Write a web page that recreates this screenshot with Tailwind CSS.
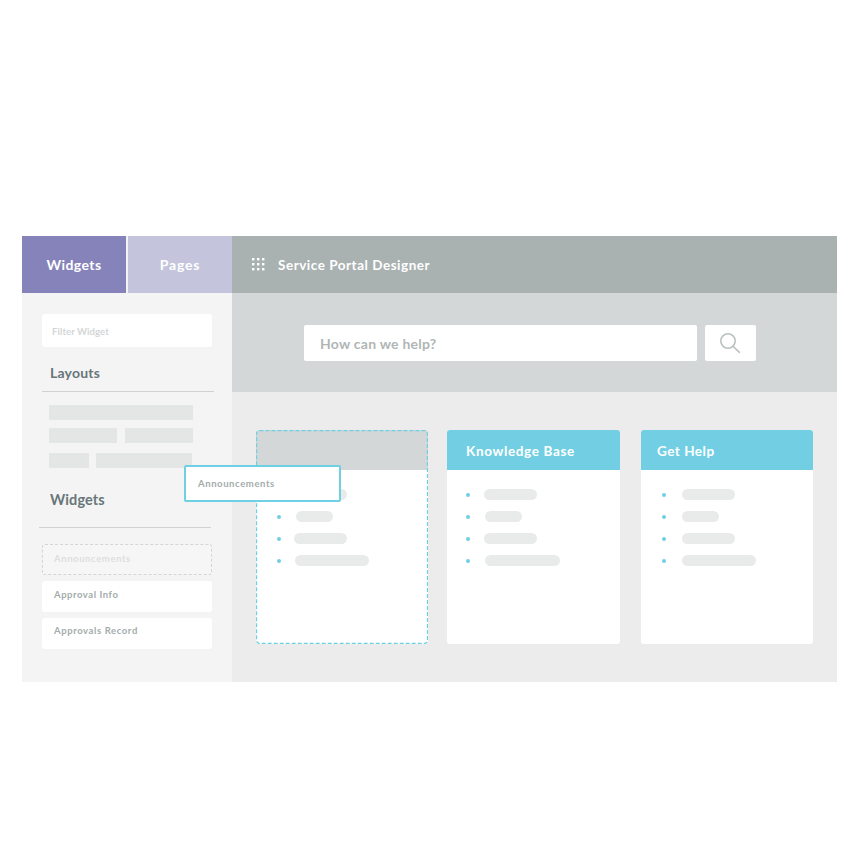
<!doctype html>
<html lang="en">
  <head>
    <meta charset="utf-8" />
    <title>Service Portal Designer</title>
    <script src="https://cdn.jsdelivr.net/npm/@tailwindcss/browser@4"></script>
  </head>
  <body class="bg-white font-['Lato',sans-serif] w-[860px] h-[860px] overflow-hidden">
    <div class="pt-[236px] pl-[22px]">
      <div class="relative flex w-[815px] h-[446px]">
        <!-- left column -->
        <div class="w-[210px] flex flex-col bg-[#f4f4f4]">
          <div class="flex h-[57px] shrink-0">
            <div class="w-[104px] mr-[2px] bg-[#8683ba] text-white text-[14px] font-bold tracking-[0.4px] flex items-center justify-center">Widgets</div>
            <div class="w-[104px] bg-[#c4c4dc] text-white text-[14px] font-bold tracking-[0.8px] flex items-center justify-center">Pages</div>
          </div>
          <div class="pt-[21px] flex flex-col">
            <div class="ml-[20px] w-[170px] h-[33px] pt-[3px] bg-white rounded-[3px] pl-[10px] flex items-center text-[#d3d6d6] text-[9.5px] font-bold tracking-[0.1px]">Filter Widget</div>
            <h2 class="ml-[28px] mt-[17px] h-[20px] leading-[18px] text-[#68767a] text-[14px] font-bold tracking-[0.2px]">Layouts</h2>
            <div class="ml-[20px] mt-[7px] w-[172px] border-t border-[#d0d3d3]"></div>
            <div class="ml-[27px] mt-[13px] flex flex-col w-[144px]">
              <div class="h-[15px] bg-[#e4e6e5]"></div>
              <div class="mt-[8px] flex justify-between">
                <div class="w-[68px] h-[15px] bg-[#e4e6e5]"></div>
                <div class="w-[68px] h-[15px] bg-[#e4e6e5]"></div>
              </div>
              <div class="mt-[10px] flex">
                <div class="w-[40px] h-[15px] bg-[#e4e6e5]"></div>
                <div class="ml-[7px] w-[96px] h-[15px] bg-[#e4e6e5]"></div>
              </div>
            </div>
            <h2 class="ml-[28px] mt-[22px] h-[20px] leading-[20px] text-[#68767a] text-[14.5px] font-bold tracking-[0.1px]">Widgets</h2>
            <div class="ml-[17px] mt-[17px] w-[172px] border-t border-[#d0d3d3]"></div>
            <div class="ml-[20px] mt-[16px] w-[170px] flex flex-col gap-[6px]">
              <div class="h-[31px] bg-[#f6f6f6] border border-dashed border-[#d3d6d6] rounded-[3px] pl-[11px] flex items-center text-[#dcdfdf] text-[9.5px] font-bold tracking-[0.6px]">Announcements</div>
              <div class="h-[31px] pb-[3px] bg-white rounded-[3px] pl-[12px] flex items-center text-[#a3acac] text-[9.5px] font-bold tracking-[0.55px]">Approval Info</div>
              <div class="h-[31px] pb-[4px] bg-white rounded-[3px] pl-[12px] flex items-center text-[#a3acac] text-[9.5px] font-bold tracking-[0.6px]">Approvals Record</div>
            </div>
          </div>
        </div>
        <!-- right column -->
        <div class="w-[605px] flex flex-col bg-[#ececec]">
          <div class="h-[57px] shrink-0 bg-[#a9b1b1] flex items-center pl-[20px]">
            <svg width="13" height="13" viewBox="0 0 13 13" fill="#fff">
              <rect x="0" y="0" width="2.4" height="2.4" /><rect x="5" y="0" width="2.4" height="2.4" /><rect x="10" y="0" width="2.4" height="2.4" />
              <rect x="0" y="5" width="2.4" height="2.4" /><rect x="5" y="5" width="2.4" height="2.4" /><rect x="10" y="5" width="2.4" height="2.4" />
              <rect x="0" y="10" width="2.4" height="2.4" /><rect x="5" y="10" width="2.4" height="2.4" /><rect x="10" y="10" width="2.4" height="2.4" />
            </svg>
            <span class="ml-[13px] pt-[2px] text-white text-[13.5px] font-bold tracking-[0.52px]">Service Portal Designer</span>
          </div>
          <div class="h-[99px] shrink-0 bg-[#d3d7d7] pl-[72px] pt-[32px] flex">
            <div class="w-[392.5px] h-[36px] bg-white rounded-[2px] pl-[16px] flex items-center text-[#b0b6b6] text-[14px] font-bold tracking-[0.25px]">How can we help?</div>
            <div class="ml-[8.5px] w-[51px] h-[36px] bg-white rounded-[2px] flex items-center justify-center">
              <svg class="-ml-[2px] -mt-[1px]" width="22" height="22" viewBox="0 0 22 22" fill="none" stroke="#b9c1c1" stroke-width="1.6" stroke-linecap="round">
                <circle cx="9" cy="9" r="7.2" />
                <path d="M14 14.2 20.4 20.4" />
              </svg>
            </div>
          </div>
          <div class="flex pt-[38px] pl-[24px]">
            <div class="relative w-[172px] h-[214px] bg-white rounded-[3px] overflow-hidden">
              <div class="h-[40px] bg-[#d3d7d7]"></div>
              <ul class="pt-[19px] flex flex-col gap-[11px]">
                <li class="flex items-center h-[11px] pl-[21px]"><span class="w-[4px] h-[4px] rounded-full bg-[#6fcfe3]"></span><span class="ml-[13px] w-[53px] h-[11px] rounded-full bg-[#e9ebea]"></span></li>
                <li class="flex items-center h-[11px] pl-[21px]"><span class="w-[4px] h-[4px] rounded-full bg-[#6fcfe3]"></span><span class="ml-[15px] w-[37px] h-[11px] rounded-full bg-[#e9ebea]"></span></li>
                <li class="flex items-center h-[11px] pl-[21px]"><span class="w-[4px] h-[4px] rounded-full bg-[#6fcfe3]"></span><span class="ml-[13px] w-[53px] h-[11px] rounded-full bg-[#e9ebea]"></span></li>
                <li class="flex items-center h-[11px] pl-[21px]"><span class="w-[4px] h-[4px] rounded-full bg-[#6fcfe3]"></span><span class="ml-[14px] w-[74px] h-[11px] rounded-full bg-[#e9ebea]"></span></li>
              </ul>
              <!-- dashed outline sits over the grey header -->
              <svg class="absolute inset-0" width="172" height="214" fill="none" stroke="#6fcfe3" stroke-width="1.3">
                <rect x="0.5" y="0.5" width="171" height="213" rx="3" stroke-dasharray="4 2" />
              </svg>
            </div>
            <div class="ml-[19px] w-[173px] h-[214px] bg-white rounded-[3px] overflow-hidden">
              <div class="h-[40px] pt-[2px] bg-[#72cfe3] pl-[19px] flex items-center text-white text-[13.5px] font-bold tracking-[0.65px]">Knowledge Base</div>
              <ul class="pt-[19px] flex flex-col gap-[11px]">
                <li class="flex items-center h-[11px] pl-[19px]"><span class="w-[4px] h-[4px] rounded-full bg-[#6fcfe3]"></span><span class="ml-[14px] w-[53px] h-[11px] rounded-full bg-[#e9ebea]"></span></li>
                <li class="flex items-center h-[11px] pl-[19px]"><span class="w-[4px] h-[4px] rounded-full bg-[#6fcfe3]"></span><span class="ml-[15px] w-[37px] h-[11px] rounded-full bg-[#e9ebea]"></span></li>
                <li class="flex items-center h-[11px] pl-[19px]"><span class="w-[4px] h-[4px] rounded-full bg-[#6fcfe3]"></span><span class="ml-[14px] w-[53px] h-[11px] rounded-full bg-[#e9ebea]"></span></li>
                <li class="flex items-center h-[11px] pl-[19px]"><span class="w-[4px] h-[4px] rounded-full bg-[#6fcfe3]"></span><span class="ml-[15px] w-[75px] h-[11px] rounded-full bg-[#e9ebea]"></span></li>
              </ul>
            </div>
            <div class="ml-[21px] w-[172px] h-[214px] bg-white rounded-[3px] overflow-hidden">
              <div class="h-[40px] pt-[2px] bg-[#72cfe3] pl-[16px] flex items-center text-white text-[13.5px] font-bold tracking-[0.5px]">Get Help</div>
              <ul class="pt-[19px] flex flex-col gap-[11px]">
                <li class="flex items-center h-[11px] pl-[21px]"><span class="w-[4px] h-[4px] rounded-full bg-[#6fcfe3]"></span><span class="ml-[16px] w-[53px] h-[11px] rounded-full bg-[#e9ebea]"></span></li>
                <li class="flex items-center h-[11px] pl-[21px]"><span class="w-[4px] h-[4px] rounded-full bg-[#6fcfe3]"></span><span class="ml-[16px] w-[37px] h-[11px] rounded-full bg-[#e9ebea]"></span></li>
                <li class="flex items-center h-[11px] pl-[21px]"><span class="w-[4px] h-[4px] rounded-full bg-[#6fcfe3]"></span><span class="ml-[16px] w-[53px] h-[11px] rounded-full bg-[#e9ebea]"></span></li>
                <li class="flex items-center h-[11px] pl-[21px]"><span class="w-[4px] h-[4px] rounded-full bg-[#6fcfe3]"></span><span class="ml-[16px] w-[74px] h-[11px] rounded-full bg-[#e9ebea]"></span></li>
              </ul>
            </div>
          </div>
        </div>
        <!-- card being dragged -->
        <div class="absolute left-[162px] top-[229px] w-[157px] h-[37px] pt-[1px] bg-white border-2 border-[#6fcfe3] rounded-[2px] pl-[12px] flex items-center text-[#a3acac] text-[9.5px] font-bold tracking-[0.6px]">Announcements</div>
      </div>
    </div>
  </body>
</html>
